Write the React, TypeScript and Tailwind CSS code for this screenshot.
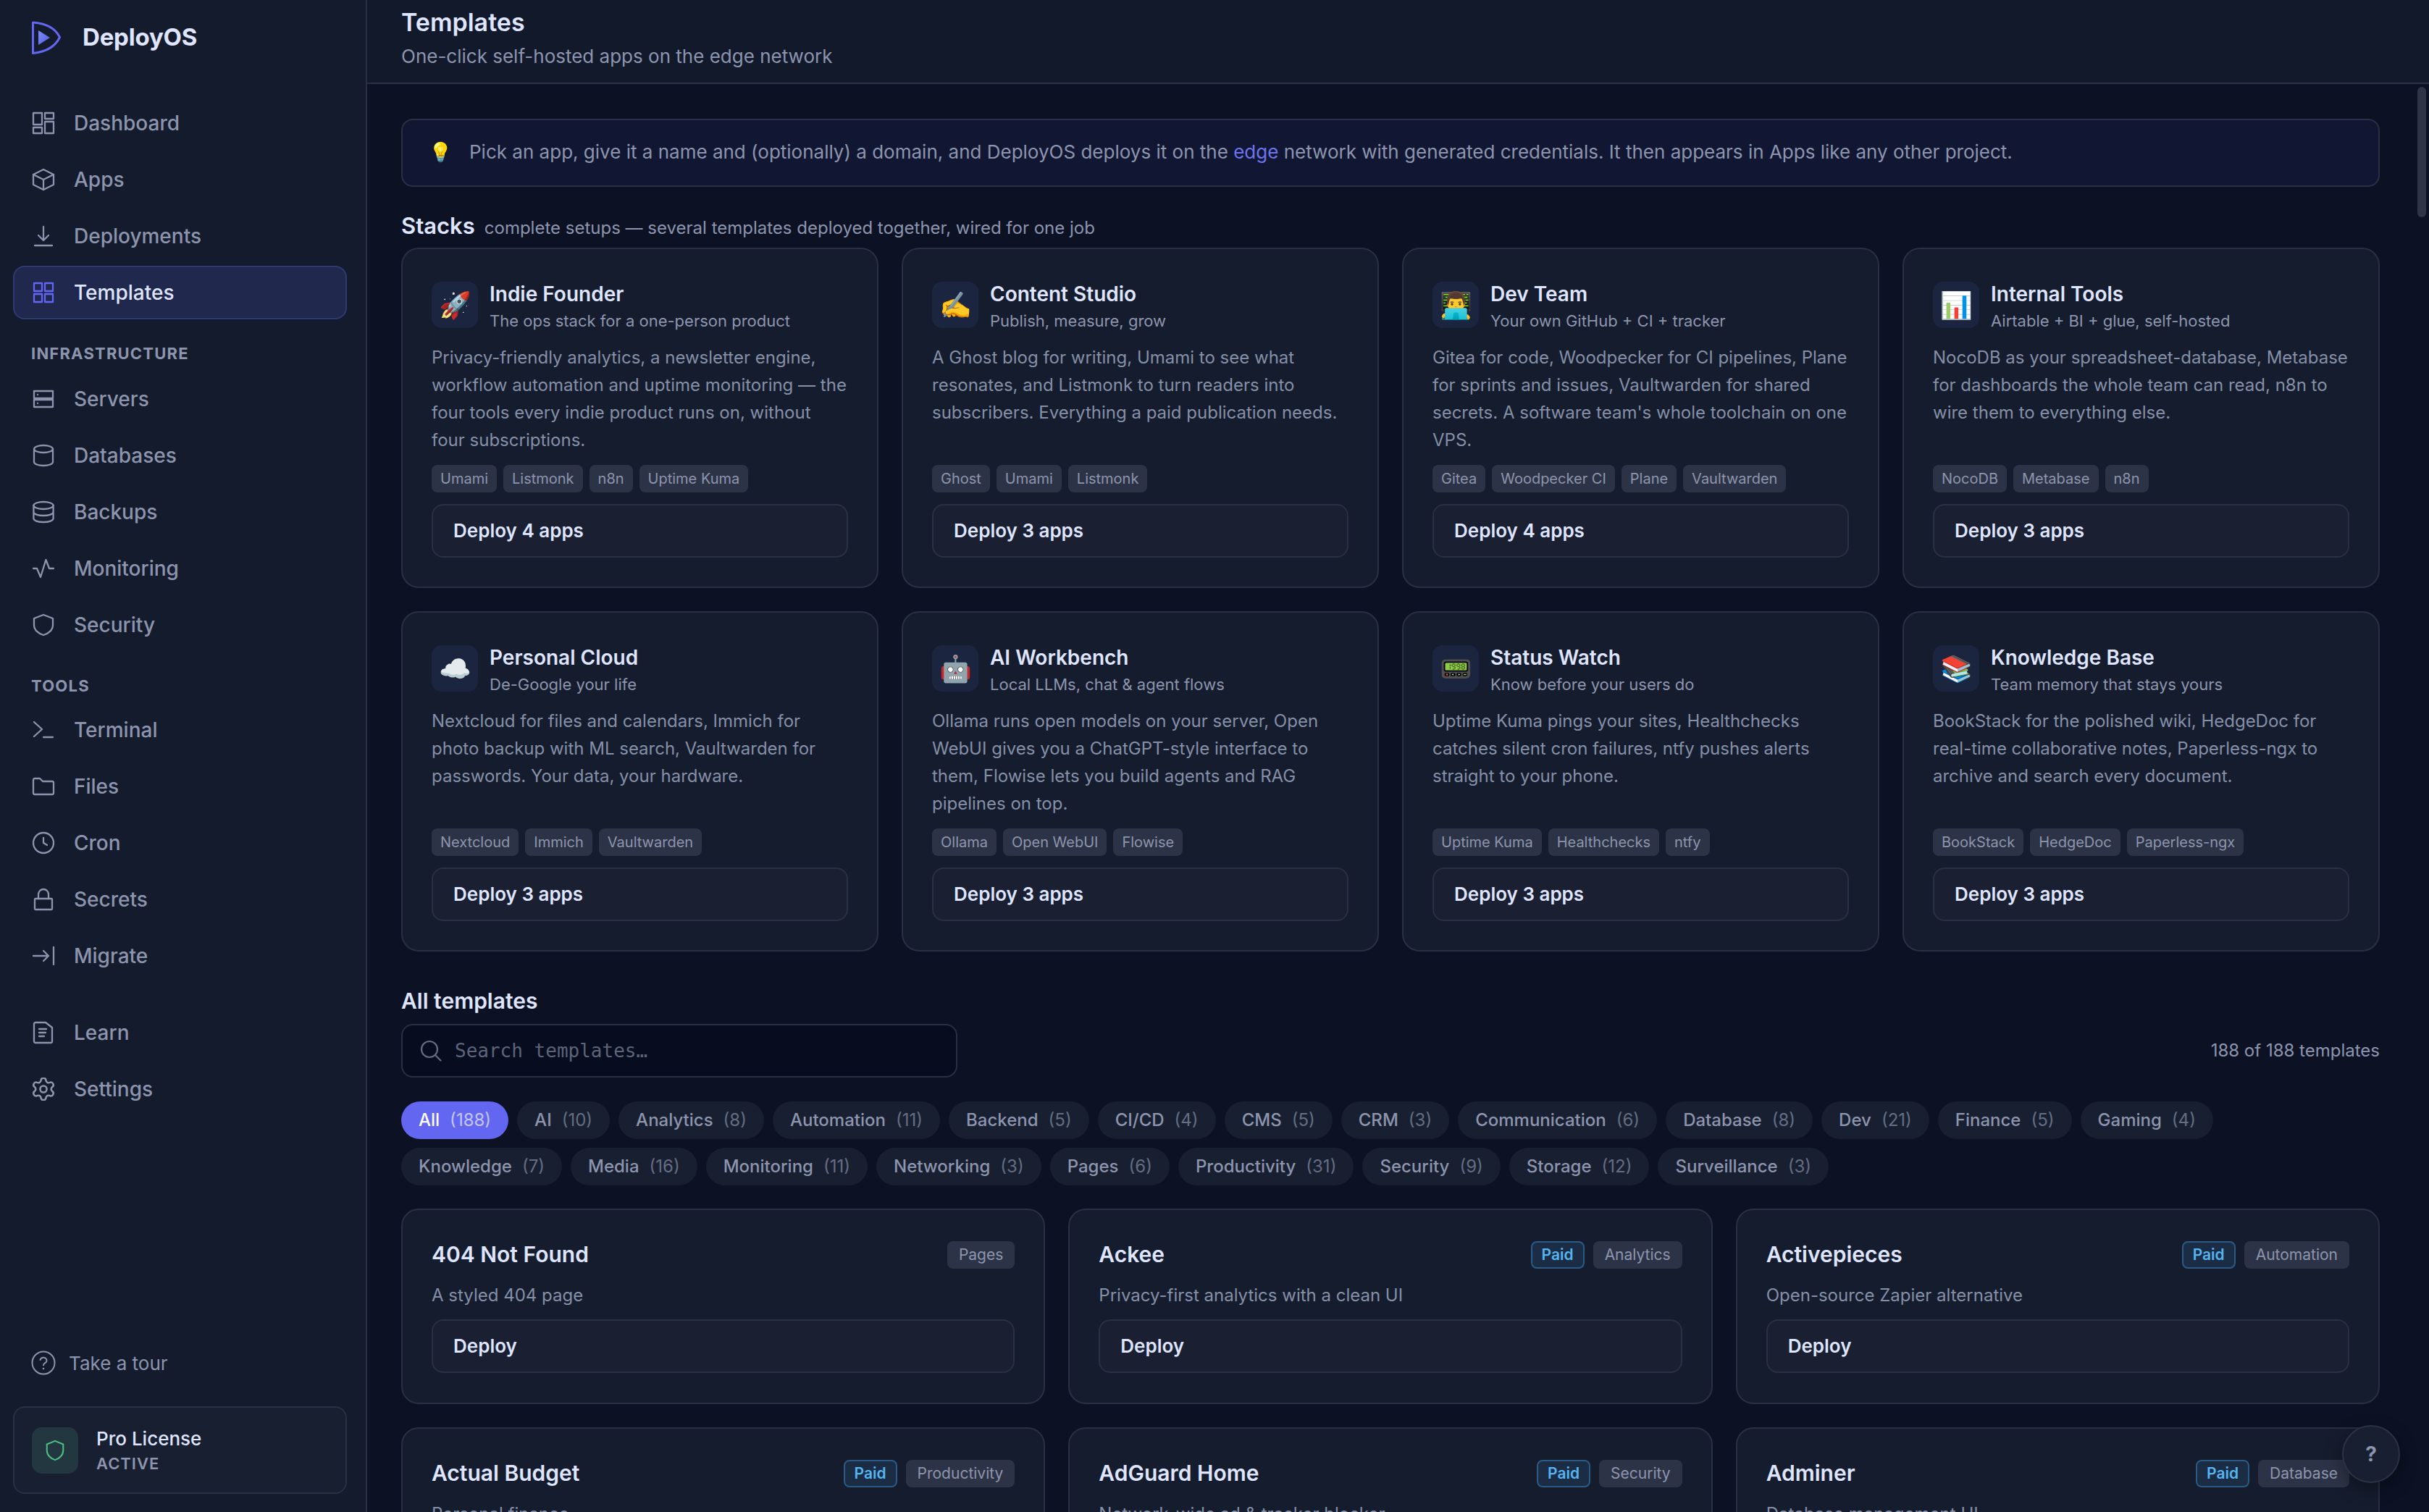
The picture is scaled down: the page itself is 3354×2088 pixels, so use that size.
import type { ReactNode } from "react"
import { Settings as GearIcon } from "lucide-react"

const sans = "font-['Inter','Noto_Sans',sans-serif]"

function Ico({ children }: { children: ReactNode }) {
  return (
    <svg viewBox="0 0 16 16" width={32} height={32} fill="none" stroke="currentColor" strokeWidth={1.15} strokeLinecap="round" strokeLinejoin="round" className="shrink-0">
      {children}
    </svg>
  )
}

const icons: Record<string, ReactNode> = {
  dashboard: (
    <Ico>
      <rect x="1" y="1" width="6" height="8" />
      <rect x="9" y="1" width="6" height="4" />
      <rect x="9" y="7" width="6" height="8" />
      <rect x="1" y="11" width="6" height="4" />
    </Ico>
  ),
  apps: (
    <Ico>
      <path d="M8 1 15 4.500v7L8 15l-7-3.500v-7L8 1Z" />
      <path d="M1 4.500 8 8l7-3.500M8 8v7" />
    </Ico>
  ),
  deployments: (
    <Ico>
      <path d="M8 1.500V11M4.500 7.500 8 11l3.500-3.500M2 14.500h12" />
    </Ico>
  ),
  templates: (
    <Ico>
      <rect x="1.500" y="1.500" width="5.500" height="5.500" />
      <rect x="9" y="1.500" width="5.500" height="5.500" />
      <rect x="1.500" y="9" width="5.500" height="5.500" />
      <rect x="9" y="9" width="5.500" height="5.500" />
    </Ico>
  ),
  servers: (
    <Ico>
      <rect x="1.500" y="2.500" width="13" height="5" />
      <rect x="1.500" y="8.500" width="13" height="5" />
      <path d="M4 5h.01M4 11h.01" />
    </Ico>
  ),
  databases: (
    <Ico>
      <ellipse cx="8" cy="3.500" rx="6.500" ry="2.500" />
      <path d="M1.500 3.500v9c0 1.400 2.900 2.500 6.500 2.500s6.500-1.100 6.500-2.500v-9" />
    </Ico>
  ),
  backups: (
    <Ico>
      <ellipse cx="8" cy="3.500" rx="6.800" ry="2.500" />
      <path d="M1.200 3.500v9c0 1.400 3 2.500 6.800 2.500s6.800-1.100 6.800-2.500v-9M1.200 8c0 1.400 3 2.500 6.800 2.500s6.800-1.100 6.800-2.500" />
    </Ico>
  ),
  monitoring: (
    <Ico>
      <path d="M1 8h2.500L6 14 9.700 2 12 8h3" />
    </Ico>
  ),
  security: (
    <Ico>
      <path d="M8 1l6.500 2.500V8c0 3.500-3 6-6.500 7-3.500-1-6.500-3.500-6.500-7V3.500L8 1Z" />
    </Ico>
  ),
  terminal: (
    <Ico>
      <path d="M1.500 2.500 7 7.500l-5.500 5M8 13h6.500" />
    </Ico>
  ),
  files: (
    <Ico>
      <path d="M1 3.500a1 1 0 0 1 1-1h3.500l2 2H14a1 1 0 0 1 1 1v7a1 1 0 0 1-1 1H2a1 1 0 0 1-1-1v-9Z" />
    </Ico>
  ),
  cron: (
    <Ico>
      <circle cx="8" cy="8" r="7" />
      <path d="M8 4.500V8l2.500 1.500" />
    </Ico>
  ),
  secrets: (
    <Ico>
      <rect x="2" y="7.500" width="12" height="7.500" rx="0.500" />
      <path d="M4.500 7.500V4.500a3.500 3.500 0 0 1 7 0v3" />
    </Ico>
  ),
  migrate: (
    <Ico>
      <path d="M1 8h10.500M8 4.500 11.500 8 8 11.500M15 2v12" />
    </Ico>
  ),
  learn: (
    <Ico>
      <path d="M2.500 1h7L14 4.500V14a1 1 0 0 1-1 1H2.500a1 1 0 0 1-1-1V2a1 1 0 0 1 1-1Z" />
      <path d="M5 5.500h5M5 8h4.500M5 10.500h3.500" />
    </Ico>
  ),
  settings: <GearIcon size={32} viewBox="1.5 1.5 21 21" strokeWidth={1.7} className="shrink-0" />,
}

function NavRow({ name, icon, active }: { name: string; icon: string; active?: boolean }) {
  return (
    <div
      className={
        active
          ? "flex h-[74px] items-center gap-[26px] rounded-[16px] border-2 border-[#2e3a72] bg-[#20284d] pl-[24px] text-[#dfe5ff]"
          : "flex h-[74px] items-center gap-[26px] rounded-[16px] border-2 border-transparent pl-[24px] text-[#8d95ae]"
      }
    >
      <span className={active ? "text-[#6366f1]" : ""}>{icons[icon]}</span>
      <span className="text-[28px] font-medium">{name}</span>
    </div>
  )
}

function Sidebar() {
  return (
    <aside className="flex h-full w-[507px] shrink-0 flex-col border-r-2 border-[#2a3043] bg-[#141b2c] pr-[26px] pl-[18px]">
      <div className="flex h-[104px] items-center gap-[30px] pl-[26px]">
        <svg viewBox="0 0 40 46" width={40} height={46} className="shrink-0">
          <defs>
            <linearGradient id="logoFill" x1="0" y1="0" x2="1" y2="1">
              <stop offset="0" stopColor="#818cf8" />
              <stop offset="1" stopColor="#4f5be0" />
            </linearGradient>
          </defs>
          <path d="M1.500 2C16 3 31 7 38.500 22.500 31 38 16 43 1.500 44.500Z" fill="none" stroke="#6366f1" strokeWidth="3" strokeLinejoin="round" />
          <path d="M9 13l16 10-16 10Z" fill="url(#logoFill)" />
        </svg>
        <span className="text-[33px] font-bold tracking-[-0.2px] text-[#dfe5ff]">DeployOS</span>
      </div>
      <nav className="mt-[29px] flex flex-col gap-[4px]">
        <NavRow name="Dashboard" icon="dashboard" />
        <NavRow name="Apps" icon="apps" />
        <NavRow name="Deployments" icon="deployments" />
        <NavRow name="Templates" icon="templates" active />
      </nav>
      <div className="mt-[34px] mb-[12px] h-[27px] pl-[25px] text-[22px] leading-[27px] font-bold tracking-[1.2px] text-[#8d95ae]">INFRASTRUCTURE</div>
      <nav className="flex flex-col gap-[4px]">
        <NavRow name="Servers" icon="servers" />
        <NavRow name="Databases" icon="databases" />
        <NavRow name="Backups" icon="backups" />
        <NavRow name="Monitoring" icon="monitoring" />
        <NavRow name="Security" icon="security" />
      </nav>
      <div className="mt-[34px] mb-[10px] h-[27px] pl-[25px] text-[22px] leading-[27px] font-bold tracking-[1.2px] text-[#8d95ae]">TOOLS</div>
      <nav className="flex flex-col gap-[4px]">
        <NavRow name="Terminal" icon="terminal" />
        <NavRow name="Files" icon="files" />
        <NavRow name="Cron" icon="cron" />
        <NavRow name="Secrets" icon="secrets" />
        <NavRow name="Migrate" icon="migrate" />
      </nav>
      <nav className="mt-[32px] flex flex-col gap-[4px]">
        <NavRow name="Learn" icon="learn" />
        <NavRow name="Settings" icon="settings" />
      </nav>
      <div className="mt-auto flex h-[40px] items-center gap-[18px] pl-[25px] text-[#8d95ae]">
        <svg viewBox="0 0 34 34" width={34} height={34} fill="none" stroke="currentColor" strokeWidth="2" strokeLinecap="round">
          <circle cx="17" cy="17" r="15.500" />
          <path d="M12.500 13a4.600 4.600 0 0 1 9 1.200c0 3-4.500 3.400-4.500 6" />
          <path d="M17 25h.02" strokeWidth="2.600" />
        </svg>
        <span className="text-[26px]">Take a tour</span>
      </div>
      <div className="mt-[40px] mb-[25px] flex h-[121px] items-center gap-[25px] rounded-[16px] border-2 border-[#2a3043] bg-[#181f30] pl-[24px]">
        <div className="flex h-[64px] w-[64px] items-center justify-center rounded-[14px] bg-[#22373f] text-[#4ebf82]">
          <svg viewBox="0 0 16 16" width={30} height={30} fill="none" stroke="currentColor" strokeWidth="1.100" strokeLinejoin="round">
            <path d="M8 1l6 2.500V8c0 3.500-2.800 6-6 7-3.200-1-6-3.500-6-7V3.500L8 1Z" />
          </svg>
        </div>
        <div>
          <div className="text-[26px] leading-[36px] font-medium text-[#dfe5ff]">Pro License</div>
          <div className="text-[22px] leading-[32px] font-semibold tracking-[1px] text-[#8d95ae]">ACTIVE</div>
        </div>
      </div>
    </aside>
  )
}

function StackTag({ children }: { children: ReactNode }) {
  return <span className="flex h-[38px] items-center rounded-[8px] bg-[#2d3346] px-[12px] text-[20px] text-[#8d95ae]">{children}</span>
}

function CatTag({ children }: { children: ReactNode }) {
  return <span className="flex h-[38px] items-center rounded-[8px] bg-[#2d3346] px-[16px] text-[21px] text-[#8d95ae]">{children}</span>
}

function PaidTag() {
  return <span className="flex h-[38px] items-center rounded-[8px] border-2 border-[#2a5a85] bg-[#1b2c45] px-[13px] text-[21px] font-semibold text-[#56b4f0]">Paid</span>
}

const stacks = [
  { emoji: "🚀", name: "Indie Founder", sub: "The ops stack for a one-person product", desc: "Privacy-friendly analytics, a newsletter engine, workflow automation and uptime monitoring — the four tools every indie product runs on, without four subscriptions.", tags: ["Umami", "Listmonk", "n8n", "Uptime Kuma"], n: 4 },
  { emoji: "✍️", name: "Content Studio", sub: "Publish, measure, grow", desc: "A Ghost blog for writing, Umami to see what resonates, and Listmonk to turn readers into subscribers. Everything a paid publication needs.", tags: ["Ghost", "Umami", "Listmonk"], n: 3 },
  { emoji: "👨‍💻", name: "Dev Team", sub: "Your own GitHub + CI + tracker", desc: "Gitea for code, Woodpecker for CI pipelines, Plane for sprints and issues, Vaultwarden for shared secrets. A software team's whole toolchain on one VPS.", tags: ["Gitea", "Woodpecker CI", "Plane", "Vaultwarden"], n: 4 },
  { emoji: "📊", name: "Internal Tools", sub: "Airtable + BI + glue, self-hosted", desc: "NocoDB as your spreadsheet-database, Metabase for dashboards the whole team can read, n8n to wire them to everything else.", tags: ["NocoDB", "Metabase", "n8n"], n: 3 },
  { emoji: "☁️", name: "Personal Cloud", sub: "De-Google your life", desc: "Nextcloud for files and calendars, Immich for photo backup with ML search, Vaultwarden for passwords. Your data, your hardware.", tags: ["Nextcloud", "Immich", "Vaultwarden"], n: 3 },
  { emoji: "🤖", name: "AI Workbench", sub: "Local LLMs, chat & agent flows", desc: "Ollama runs open models on your server, Open WebUI gives you a ChatGPT-style interface to them, Flowise lets you build agents and RAG pipelines on top.", tags: ["Ollama", "Open WebUI", "Flowise"], n: 3 },
  { emoji: "📟", name: "Status Watch", sub: "Know before your users do", desc: "Uptime Kuma pings your sites, Healthchecks catches silent cron failures, ntfy pushes alerts straight to your phone.", tags: ["Uptime Kuma", "Healthchecks", "ntfy"], n: 3 },
  { emoji: "📚", name: "Knowledge Base", sub: "Team memory that stays yours", desc: "BookStack for the polished wiki, HedgeDoc for real-time collaborative notes, Paperless-ngx to archive and search every document.", tags: ["BookStack", "HedgeDoc", "Paperless-ngx"], n: 3 },
]

const chipsA: [string, number][] = [["AI", 10], ["Analytics", 8], ["Automation", 11], ["Backend", 5], ["CI/CD", 4], ["CMS", 5], ["CRM", 3], ["Communication", 6], ["Database", 8], ["Dev", 21], ["Finance", 5], ["Gaming", 4]]
const chipsB: [string, number][] = [["Knowledge", 7], ["Media", 16], ["Monitoring", 11], ["Networking", 3], ["Pages", 6], ["Productivity", 31], ["Security", 9], ["Storage", 12], ["Surveillance", 3]]

const templates = [
  { name: "404 Not Found", desc: "A styled 404 page", cat: "Pages", paid: false },
  { name: "Ackee", desc: "Privacy-first analytics with a clean UI", cat: "Analytics", paid: true },
  { name: "Activepieces", desc: "Open-source Zapier alternative", cat: "Automation", paid: true },
  { name: "Actual Budget", desc: "Personal finance", cat: "Productivity", paid: true },
  { name: "AdGuard Home", desc: "Network-wide ad & tracker blocker", cat: "Security", paid: true },
  { name: "Adminer", desc: "Database management UI", cat: "Database", paid: true },
]

function DeployButton({ label }: { label: string }) {
  return (
    <div className="flex h-[74px] items-center rounded-[16px] border-2 border-[#2a3043] bg-[#1a2031] px-[28px] pb-[1px] text-[26px] font-semibold text-[#dfe5ff]">
      {label}
    </div>
  )
}

function StackCard({ s }: { s: (typeof stacks)[number] }) {
  return (
    <div className="flex h-[470px] flex-col rounded-[24px] border-2 border-[#2a3043] bg-[#151c2d] p-[40px]">
      <div className="flex h-[74px] items-center gap-[16px]">
        <div className="flex h-[64px] w-[64px] shrink-0 items-center justify-center rounded-[14px] bg-[#1b2540] text-[36px]">{s.emoji}</div>
        <div>
          <div className="pt-[3px] text-[28px] leading-[40px] font-semibold text-[#dfe5ff]">{s.name}</div>
          <div className="text-[22px] leading-[34px] text-[#8d95ae]">{s.sub}</div>
        </div>
      </div>
      <p className="mt-[17px] flex-1 text-[24px] leading-[38px] text-[#8590a8]">{s.desc}</p>
      <div className="mt-[15px] flex gap-[9px]">
        {s.tags.map((t) => (
          <StackTag key={t}>{t}</StackTag>
        ))}
      </div>
      <div className="mt-[16px]">
        <DeployButton label={`Deploy ${s.n} apps`} />
      </div>
    </div>
  )
}

function TemplateCard({ t }: { t: (typeof templates)[number] }) {
  return (
    <div className="flex h-[270px] flex-col rounded-[24px] border-2 border-[#2a3043] bg-[#151c2d] px-[40px] pt-[40px]">
      <div className="flex h-[44px] items-center justify-between">
        <span className="pb-[2px] text-[30px] font-semibold text-[#dfe5ff]">{t.name}</span>
        <div className="flex gap-[12px]">
          {t.paid && <PaidTag />}
          <CatTag>{t.cat}</CatTag>
        </div>
      </div>
      <div className="mt-[15px] text-[24px] leading-[38px] text-[#8590a8]">{t.desc}</div>
      <div className="mt-[14px]">
        <DeployButton label="Deploy" />
      </div>
    </div>
  )
}

function Chip({ name, n, active }: { name: string; n: number; active?: boolean }) {
  return (
    <span
      className={
        active
          ? "flex h-[52px] items-center gap-[14px] rounded-full bg-[#6366f1] px-[24px] text-[24px] font-medium text-white"
          : "flex h-[52px] items-center gap-[14px] rounded-full bg-[#181f30] px-[24px] text-[24px] font-medium text-[#8d95ae]"
      }
    >
      {name}
      <span className={active ? "font-normal text-[#c3c6fb]" : "font-normal text-[#656d83]"}>({n})</span>
    </span>
  )
}

export default function App() {
  return (
    <div className={`relative flex h-[2088px] w-[3354px] overflow-hidden bg-[#0c1224] ${sans}`}>
      <Sidebar />
      <main className="flex min-w-0 flex-1 flex-col">
        <header className="flex h-[116px] shrink-0 flex-col border-b-2 border-[#2a3043] bg-[#12192b] pt-[8px] pl-[47px]">
          <h1 className="text-[34px] leading-[46px] font-semibold text-[#dfe5ff]">Templates</h1>
          <p className="mt-[5px] text-[26px] leading-[38px] text-[#8d95ae]">One-click self-hosted apps on the edge network</p>
        </header>
        <div className="flex-1 overflow-hidden pt-[48px] pr-[68px] pl-[47px]">
          <div className="flex h-[94px] items-center gap-[24px] rounded-[16px] border-2 border-[#2a3043] bg-[#111732] pb-[3px] pl-[36px] text-[26px] text-[#8d95ae]">
            <span>💡</span>
            <span>
              Pick an app, give it a name and (optionally) a domain, and DeployOS deploys it on the <span className="text-[#6d74ee]">edge</span> network with generated credentials. It then appears in Apps like any other project.
            </span>
          </div>
          <div className="mt-[28px] flex h-[52px] items-baseline gap-[13px]">
            <span className="text-[31px] leading-[52px] font-semibold text-[#dfe5ff]">Stacks</span>
            <span className="text-[24px] text-[#8d95ae]">complete setups — several templates deployed together, wired for one job</span>
          </div>
          <div className="mt-[4px] grid grid-cols-4 gap-[32px]">
            {stacks.map((s) => (
              <StackCard key={s.name} s={s} />
            ))}
          </div>
          <h2 className="mt-[46px] text-[30px] leading-[44px] font-semibold text-[#dfe5ff]">All templates</h2>
          <div className="mt-[10px] flex items-center justify-between">
            <div className="flex h-[74px] w-[768px] items-center gap-[18px] rounded-[16px] border-2 border-[#2a3043] bg-[#070c1e] pl-[24px]">
              <svg viewBox="0 0 30 30" width={30} height={30} fill="none" stroke="#656d83" strokeWidth="2.200" strokeLinecap="round">
                <circle cx="13" cy="13" r="11" />
                <path d="m21 21 7.500 7.500" />
              </svg>
              <span className="font-['DejaVu_Sans_Mono',monospace] text-[26px] text-[#5d6479]">Search templates…</span>
            </div>
            <span className="text-[24px] text-[#8d95ae]">188 of 188 templates</span>
          </div>
          <div className="mt-[33px] flex flex-wrap gap-[12px]">
            <Chip name="All" n={188} active />
            {chipsA.map(([name, n]) => (
              <Chip key={name} name={name} n={n} />
            ))}
          </div>
          <div className="mt-[12px] flex flex-wrap gap-[12px]">
            {chipsB.map(([name, n]) => (
              <Chip key={name} name={name} n={n} />
            ))}
          </div>
          <div className="mt-[32px] grid grid-cols-3 gap-[32px]">
            {templates.map((t) => (
              <TemplateCard key={t.name} t={t} />
            ))}
          </div>
        </div>
      </main>
      <div className="absolute top-[120px] right-[4px] h-[180px] w-[12px] rounded-full bg-[#2f3447]" />
      <div className="absolute right-[40px] bottom-[40px] flex h-[80px] w-[80px] items-center justify-center rounded-full border-2 border-[#2c3245] bg-[#181f30] text-[28px] font-bold text-[#8d95ae] shadow-[0_8px_24px_rgba(0,0,0,0.35)]">
        ?
      </div>
    </div>
  )
}
